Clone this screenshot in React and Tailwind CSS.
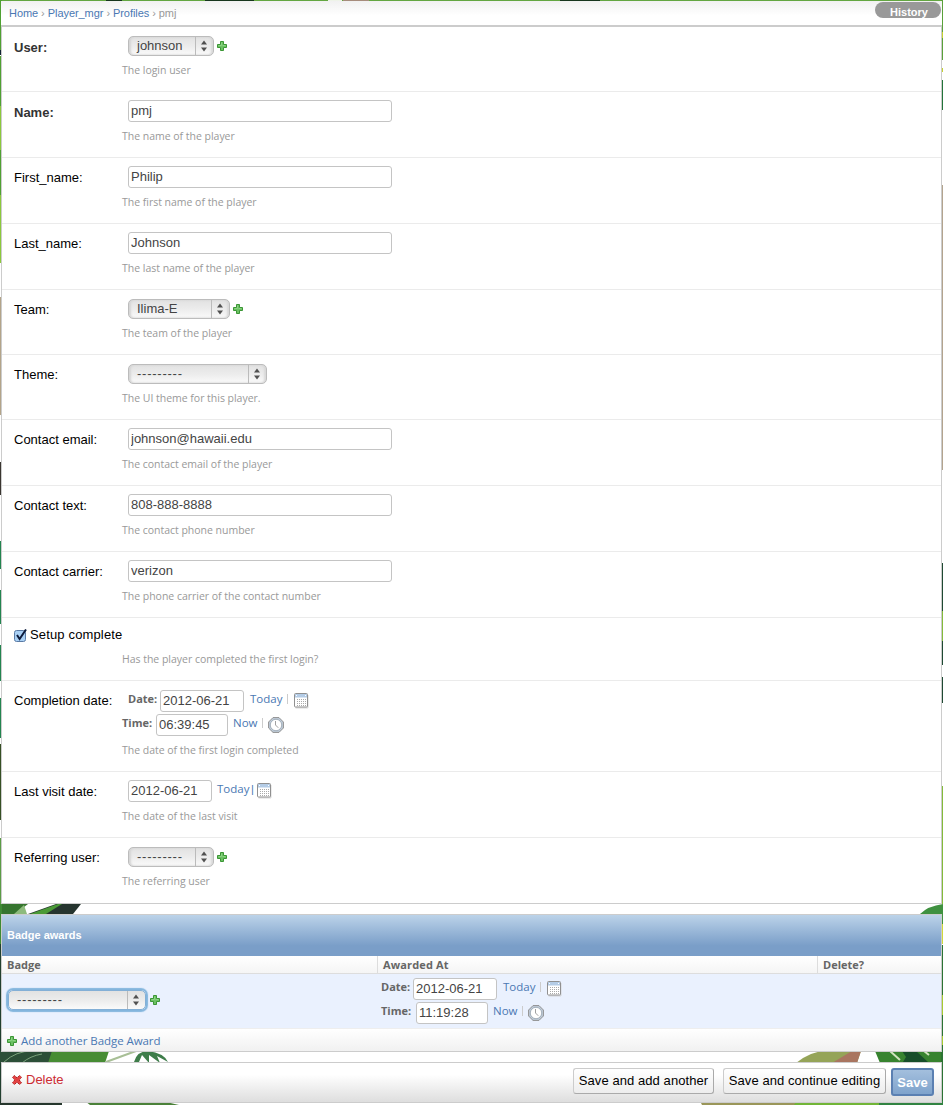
import React from 'react';

const HELV = "font-['Liberation_Sans',Arial,sans-serif]";
const LUCIDA = "font-['Open_Sans','Noto_Sans',sans-serif]";

function Plus({ className = '' }) {
  return (
    <svg width="10" height="10" viewBox="0 0 10 10" className={`shrink-0 ${className}`}>
      <path d="M3.5 .5h3v3h3v3h-3v3h-3v-3h-3v-3h3z" fill="#6cc163" stroke="#3b9635" />
      <path d="M4.5 1.5v3h-3M5.5 4.5h3" fill="none" stroke="#8bd383" />
    </svg>
  );
}

function Cross() {
  return (
    <svg width="10" height="10" viewBox="0 0 10 10" className="shrink-0">
      <path d="M2.3 .5L5 2.8 7.7 .5 9.5 2.3 7.2 5 9.5 7.7 7.7 9.5 5 7.2 2.3 9.5 .5 7.7 2.8 5 .5 2.3z" fill="#e84a4a" stroke="#a91414" strokeDasharray="1.6 .6" />
      <path d="M2.5 2.5l5 5M7.5 2.5l-5 5" stroke="#e03f3f" strokeWidth="1.4" />
    </svg>
  );
}

function CalendarIcon() {
  return (
    <svg width="15" height="16" viewBox="0 0 15 16" className="shrink-0">
      <path d="M1.5 14.9h12.4V2" fill="none" stroke="#cfcfcf" />
      <rect x=".5" y=".5" width="13" height="13.5" rx="1" fill="#fff" stroke="#909090" />
      <rect x="1" y="1" width="12" height="3.5" fill="#b4cce6" />
      <path d="M2 2.5h1M11 2.5h1" stroke="#fff" />
      <g fill="none" stroke="#aaa" strokeDasharray="1 1" shapeRendering="crispEdges">
        <path d="M3 6.5h9" />
        <path d="M3 8.5h9" />
        <path d="M3 10.5h9" />
        <path d="M3 12.5h9" />
      </g>
    </svg>
  );
}

function ClockIcon() {
  return (
    <svg width="16" height="16" viewBox="0 0 16 16" className="shrink-0">
      <path d="M5 .6h6L15.4 5v6L11 15.4H5L.6 11V5z" fill="#c0cddb" stroke="#909090" />
      <circle cx="8" cy="8" r="5.7" fill="#fff" stroke="#97a3af" strokeWidth=".8" />
      <path d="M7.5 4v4l2.8 2.8" fill="none" stroke="#a0a0a0" />
    </svg>
  );
}

function Select({ value, width, focus = false }) {
  return (
    <div
      className={`${HELV} flex h-5 shrink-0 rounded-[5px] border bg-linear-to-b from-[#e2e2e2] via-[#ececec] to-[#fafafa] text-[13px] leading-[18px] text-[#444] ${width} ${
        focus ? 'border-[#83afd6] shadow-[0_0_1px_2px_#83b5dd]' : 'border-[#bcbcbc] shadow-[inset_2px_0_2px_#d5d5d5,inset_-2px_0_2px_#d8d8d8]'
      }`}
    >
      <span className={`flex-1 pl-2 ${value.startsWith('-') ? 'tracking-[0.75px]' : ''}`}>{value}</span>
      <span className="flex w-[18px] items-center justify-center border-l border-[#bbb] pr-px">
        <svg width="6" height="12" viewBox="0 0 6 12">
          <path d="M3 .5l3 4H0zM3 11.5l-3-4h6z" fill="#505050" />
        </svg>
      </span>
    </div>
  );
}

function Input({ value, width }) {
  return (
    <input
      defaultValue={value}
      className={`${HELV} h-[22px] shrink-0 rounded-[3px] border border-[#c4c4c4] bg-white pr-0 pb-px pl-[2px] text-[13px] text-[#444] outline-none ${width}`}
    />
  );
}

function Row({ label, bold, height, help, helpPad, children, pad = 'pt-2', last }) {
  return (
    <div className={`flex border-b pl-3 ${last ? 'border-[#ccc]' : 'border-[#ebebeb]'} ${height}`}>
      <div className={`w-[108px] shrink-0 text-[13px] leading-[17px] whitespace-nowrap ${bold ? 'pt-3 font-bold text-[#333]' : 'pt-[11px] text-black'}`}>{label}</div>
      <div className={pad}>
        {children}
        <p className={`${LUCIDA} text-[10.5px] leading-[14px] tracking-[-0.02px] whitespace-nowrap text-[#999] ${helpPad}`}>{help}</p>
      </div>
    </div>
  );
}

function TextRow({ label, value, help, bold }) {
  return (
    <Row label={label} bold={bold} help={help} height="h-[66px]" helpPad="pt-[7px]">
      <div className="flex pl-[6px]"><Input value={value} width="w-[264px]" /></div>
    </Row>
  );
}

function SelectRow({ label, value, help, bold, width, plus, height = 'h-[65px]', last }) {
  return (
    <Row label={label} bold={bold} help={help} height={height} helpPad="pt-[7px]" pad="pt-[9px]" last={last}>
      <div className="flex items-center gap-[3px] pl-[6px]">
        <Select value={value} width={width} />
        {plus && <Plus />}
      </div>
    </Row>
  );
}

const lbl = `${LUCIDA} text-[11px] leading-[14px] font-bold text-[#666] whitespace-nowrap shrink-0`;
const lnk = `${LUCIDA} text-[11.5px] leading-[14px] text-[#4a78b3] whitespace-nowrap shrink-0`;

function DateLine({ className = '', labelWidth }) {
  return (
    <div className={`flex h-[22px] ${className}`}>
      <span className={`${lbl} pt-[2px] ${labelWidth}`}>Date:</span>
      <Input value="2012-06-21" width="w-[84px]" />
      <span className={`${lnk} ml-[6px] w-[37px] pt-[2px]`}>Today</span>
      <span className="mt-1 mr-[6px] h-[10px] w-px bg-[#ccc]" />
      <div className="pt-[3px]"><CalendarIcon /></div>
    </div>
  );
}

function TimeLine({ value, className = '', labelWidth }) {
  return (
    <div className={`mt-[2px] flex h-[22px] ${className}`}>
      <span className={`${lbl} pt-[2px] ${labelWidth}`}>Time:</span>
      <Input value={value} width="w-[72px]" />
      <span className={`${lnk} ml-[5px] w-[29px] pt-[2px]`}>Now</span>
      <span className="mt-1 mr-[5px] h-[10px] w-px bg-[#ccc]" />
      <div className="pt-[3px]"><ClockIcon /></div>
    </div>
  );
}

function Foliage() {
  return (
    <svg width="943" height="1105" viewBox="0 0 943 1105" className="absolute inset-0">
      <rect width="943" height="1105" fill="#fff" />
      <path d="M0 0h943v2H0z" fill="#63a641" />
      <path d="M106 0h16v2h-16zM205 0h49v2h-49zM560 0h40v2h-40z" fill="#17361d" />
      <path d="M328 0h14v2h-14z" fill="#eef3e8" />
      <path d="M343 0h26v2h-26z" fill="#a68c7c" />
      <path d="M0 0h2v50H0zM0 56h2v50H0zM0 150h2v45H0z" fill="#4fa032" />
      <path d="M0 50h2v5H0z" fill="#123" />
      <path d="M0 106h2v44H0zM0 195h2v68H0z" fill="#8bc83c" />
      <path d="M0 297h2v118H0z" fill="#b3a489" />
      <path d="M0 462h2v33H0z" fill="#3a3630" />
      <path d="M0 541h2v28H0zM0 590h2v34H0zM0 645h2v36H0zM0 698h2v40H0z" fill="#23844f" />
      <path d="M0 744h2v76H0z" fill="#364f24" />
      <path d="M0 838h2v66H0z" fill="#5b9c46" />
      <path d="M941 0h2v60h-2z" fill="#5aa13a" />
      <path d="M941 32h2v6h-2zM941 68h2v4h-2z" fill="#c4d12f" />
      <path d="M941 80h2v30h-2z" fill="#23743a" />
      <path d="M941 185h2v285h-2z" fill="#b3a48e" />
      <path d="M941 563h2v48h-2zM941 641h2v24h-2zM941 677h2v26h-2z" fill="#1f4a33" />
      <path d="M941 611h2v30h-2zM941 786h2v118h-2z" fill="#84bb3a" />

      <path d="M0 904h28L15 914H0z" fill="#36752f" />
      <path d="M14 914l10-9 3 9z" fill="#8dbb7c" />
      <path d="M28 914l28-10h25l-8 10z" fill="#26352f" />
      <path d="M30 914l28-10h4l-16 10z" fill="#4a9a36" />
      <path d="M0 904h2v40H0z" fill="#3f8a34" />
      <path d="M0 944h2v161H0z" fill="#22402f" />
      <path d="M920 914q8-8 23-10v20h-6v-10z" fill="#3f9140" />
      <path d="M941 924h2v20h-2z" fill="#cfd93a" />
      <path d="M941 945h2v160h-2z" fill="#2c7434" />
      <path d="M941 995h2v20h-2zM941 1036h2v9h-2z" fill="#a7cb31" />

      <path d="M0 1051h52v12H0z" fill="#2c4f38" />
      <path d="M4 1062q12-11 28-11M22 1063q8-7 20-9" fill="none" stroke="#7ba37c" />
      <path d="M52 1051h57l-4 12H48z" fill="#478c34" />
      <path d="M106 1062l30-11" stroke="#a8bf96" strokeWidth="2" />
      <path d="M134 1062q3-11 14-11 16 2 20 11l-11-6 3 7-11-8v8l-7-8-3 7z" fill="#3e7d4a" />
      <path d="M796 1063q15-12 30-12h35l-4 12z" fill="#95a458" />
      <path d="M832 1063l20-12h9l-4 12z" fill="#a97560" />
      <path d="M875 1051h66v12h-61z" fill="#37832f" />
      <path d="M902 1051l4 6-3 5h25l-12-11z" fill="#174e2a" />
      <path d="M890 1051l10 9M924 1051l5 4" stroke="#d0e3bf" strokeWidth="2" />

      <path d="M0 1101h62v4H0z" fill="#26372d" />
      <path d="M85 1101h77l17 4H90z" fill="#4b8139" />
      <path d="M700 1101h97v4h-95z" fill="#9a9659" />
      <path d="M797 1101h82v4h-85z" fill="#71b537" />
      <path d="M879 1101h64v4h-64z" fill="#318341" />
    </svg>
  );
}

const btn = 'flex h-[26px] items-center justify-center rounded-[3px] border border-[#ccc] border-r-[#aaa] border-b-[#aaa] bg-linear-to-b from-white to-[#ededed] pb-px text-[13px] tracking-[0.07px] text-black whitespace-nowrap';

export default function App() {
  return (
    <div className={`${HELV} relative h-[1105px] w-[943px] overflow-hidden`}>
      <Foliage />
      <div className="relative flex w-[942px] flex-col pt-px pl-px">
        <header className="flex h-[26px] justify-between border-b-2 border-[#ccc] bg-linear-to-b from-[#f1f1f1] to-white to-60% pl-2">
          <nav className="flex gap-[3px] pt-[5px] text-[11px] leading-[15px] tracking-[-0.06px] text-[#999]">
            <a className="text-[#4a78b3]">Home</a><span>›</span>
            <a className="text-[#4a78b3]">Player_mgr</a><span>›</span>
            <a className="text-[#4a78b3]">Profiles</a><span>›</span>
            <span>pmj</span>
          </nav>
          <a className="mt-px mr-px flex h-4 w-[66px] items-end justify-center rounded-lg bg-[#999] pl-[2px] text-[11px] leading-[12px] font-bold text-white">History</a>
        </header>

        <main className="border-x border-[#ccc] bg-white">
          <SelectRow label="User:" bold value="johnson" width="w-[86px]" plus help="The login user" />
          <TextRow label="Name:" bold value="pmj" help="The name of the player" />
          <TextRow label="First_name:" value="Philip" help="The first name of the player" />
          <TextRow label="Last_name:" value="Johnson" help="The last name of the player" />
          <SelectRow label="Team:" value="Ilima-E" width="w-[102px]" plus help="The team of the player" />
          <SelectRow label="Theme:" value="---------" width="w-[139px]" help="The UI theme for this player." />
          <TextRow label="Contact email:" value="johnson@hawaii.edu" help="The contact email of the player" />
          <TextRow label="Contact text:" value="808-888-8888" help="The contact phone number" />
          <TextRow label="Contact carrier:" value="verizon" help="The phone carrier of the contact number" />
          <Row
            height="h-[63px]"
            pad="pt-[34px]"
            help="Has the player completed the first login?"
            label={
              <span className="-mt-[3px] flex items-center gap-[3px] tracking-[0.15px]">
                <svg width="13" height="13" viewBox="0 0 13 13" className="mt-px shrink-0">
                  <rect x=".5" y="1.5" width="11" height="11" rx="2" fill="#a9d0f5" stroke="#5a7ba5" />
                  <path d="M3 6l2.6 4L12 .5" fill="none" stroke="#0c1b3c" strokeWidth="2" />
                </svg>
                Setup complete
              </span>
            }
          />
          <Row label="Completion date:" height="h-[91px]" pad="pt-[9px]" help="The date of the first login completed" helpPad="pt-[7px]">
            <DateLine className="pl-[6px]" labelWidth="w-8" />
            <TimeLine value="06:39:45" labelWidth="w-[34px]" />
          </Row>
          <Row label="Last visit date:" height="h-[66px]" help="The date of the last visit" helpPad="pt-[7px]">
            <div className="flex pl-[6px]">
              <Input value="2012-06-21" width="w-[84px]" />
              <span className={`${lnk} ml-[5px] w-[34px] pt-[2px]`}>Today</span>
              <span className={`${HELV} w-[6px] pt-[2px] text-[11px] leading-[14px] text-[#4a78b3]`}>|</span>
              <div className="pt-[3px]"><CalendarIcon /></div>
            </div>
          </Row>
          <SelectRow label="Referring user:" value="---------" width="w-[86px]" plus help="The referring user" height="h-[66px]" last />
        </main>

        <section className="mt-[10px] border border-[#ccc] bg-white">
          <h2 className="flex h-[41px] items-center bg-linear-to-b from-[#bcd3e9] to-[#7a9ec8] to-75% pl-[5px] text-[11px] font-bold text-white">Badge awards</h2>
          <div className={`${LUCIDA} flex h-[18px] border-b border-[#ddd] bg-linear-to-b from-white to-[#f5f5f5] text-[11px] leading-[18px] font-bold text-[#666]`}>
            <span className="w-[375px] pl-[5px]">Badge</span>
            <span className="w-[440px] border-l border-[#ddd] pl-[5px] tracking-[0.15px]">Awarded At</span>
            <span className="flex-1 border-l border-[#ddd] pl-[5px]">Delete?</span>
          </div>
          <div className="flex h-[55px] border-b border-[#eee] bg-[#eaf1fe]">
            <div className="flex w-[379px] items-start gap-[4px] pt-4 pl-[6px]">
              <Select value="---------" width="w-[138px]" focus />
              <Plus className="mt-[5px]" />
            </div>
            <div className="pt-1">
              <DateLine labelWidth="w-8" />
              <TimeLine value="11:19:28" labelWidth="w-[35px]" />
            </div>
          </div>
          <div className="flex h-[22px] items-center gap-1 bg-linear-to-b from-white to-[#f1f1f1] pt-px pl-[5px]">
            <Plus />
            <a className={`${lnk} tracking-[-0.06px]`}>Add another Badge Award</a>
          </div>
        </section>

        <footer className="mt-[10px] flex h-[41px] border border-[#ccc] bg-linear-to-b from-white from-30% to-[#dedede]">
          <div className="flex h-[34px] flex-1 items-center gap-1 pl-[10px] text-[13px] text-[#cc2c33]">
            <Cross />
            <span>Delete</span>
          </div>
          <button className={`${btn} mt-[5px] mr-[9px] w-[141px]`}>Save and add another</button>
          <button className={`${btn} mt-[5px] mr-[5px] w-[163px]`}>Save and continue editing</button>
          <button className="mt-[5px] mr-[7px] flex h-7 w-[43px] items-center justify-center rounded-[3px] border-2 border-[#5b80b2] bg-linear-to-b from-[#a3bfdd] to-[#7fa3cc] pt-px text-[13px] font-bold text-white">Save</button>
        </footer>
      </div>
    </div>
  );
}
